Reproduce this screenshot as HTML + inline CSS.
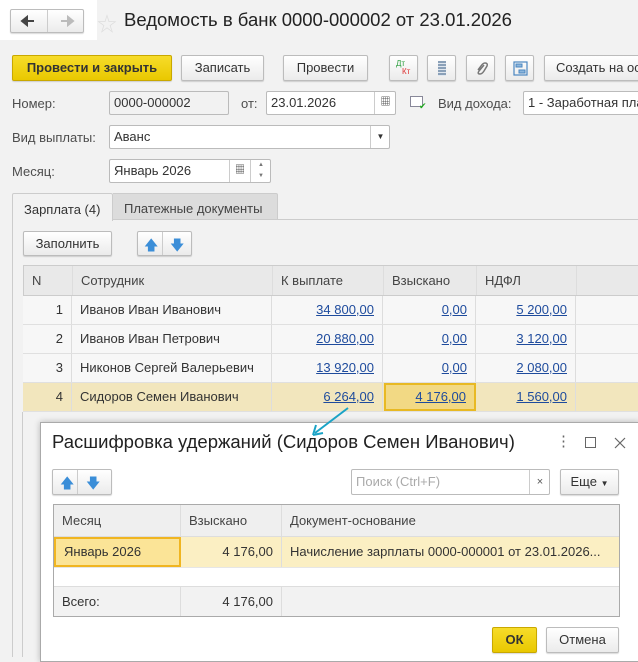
<!DOCTYPE html>
<html><head><meta charset="utf-8"><style>
*{box-sizing:border-box;margin:0;padding:0}
body{width:638px;height:657px;overflow:hidden;background:#f2f2f2;font-family:"Liberation Sans","Noto Sans CJK SC",sans-serif;font-size:13px;color:#333;position:relative}
.a{position:absolute}
.btn{position:absolute;background:linear-gradient(#fff,#ebebeb);border:1px solid #bcbcbc;border-radius:2px;box-shadow:0 1px 1px rgba(0,0,0,.15);text-align:center;color:#333;font-size:13px;white-space:nowrap;overflow:hidden}
.in{position:absolute;background:#fff;border:1px solid #bbb;border-radius:2px;padding-left:4px;font-size:13px;color:#333;white-space:nowrap;overflow:hidden}
.lbl{position:absolute;font-size:13px;color:#4d4d4d}
.c{position:absolute;height:100%;border-right:1px solid #ddd;padding:0 8px;white-space:nowrap}
.lnk{color:#1e4b9d;text-decoration:underline}
.row{position:absolute;left:23px;width:615px;height:29px;border-bottom:1px solid #e0e0e0;line-height:28px;background:#f7f7f7}
</style></head><body>
<div class="a" style="left:0;top:0;width:97px;height:40px;background:#fff"></div>
<div class="btn" style="left:10px;top:9px;width:74px;height:24px;"></div>
<div class="a" style="left:47px;top:10px;width:1px;height:22px;background:#ccc"></div>
<svg class="a" style="left:20px;top:14px" width="60" height="14"><path d="M2 7 H14 M2 7 L7 3 V11 Z" stroke="#444" stroke-width="2" fill="#444"/><path d="M41 7 H53 M53 7 L48 3 V11 Z" stroke="#bbb" stroke-width="2" fill="#bbb"/></svg>
<div class="a" style="left:97px;top:8px;font-size:20px;color:#ddd">☆</div>
<div class="a" style="left:124px;top:9px;font-size:18.5px;color:#222;white-space:nowrap">Ведомость в банк 0000-000002 от 23.01.2026</div>

<div class="btn" style="left:12px;top:55px;width:160px;height:26px;line-height:24px;background:linear-gradient(#f7dc2a,#e9c800);border-color:#c9a800;font-weight:bold;color:#333">Провести и закрыть</div>
<div class="btn" style="left:181px;top:55px;width:83px;height:26px;line-height:24px">Записать</div>
<div class="btn" style="left:283px;top:55px;width:85px;height:26px;line-height:24px">Провести</div>
<div class="btn" style="left:389px;top:55px;width:29px;height:26px"><span class="a" style="left:6px;top:3px;font-size:8px;color:#2a9d3c">Дт</span><span class="a" style="left:12px;top:11px;font-size:8px;color:#d33">Кт</span></div>
<div class="btn" style="left:427px;top:55px;width:29px;height:26px"><div class="a" style="left:10px;top:5px;width:8px;height:15px;background:repeating-linear-gradient(#8aa0b8 0 2px,#dfe6ee 2px 3px)"></div></div>
<div class="btn" style="left:466px;top:55px;width:29px;height:26px"><svg class="a" style="left:8px;top:5px" width="13" height="15"><path d="M9 4 L4 10 Q2 13 5 13 Q7 13 9 10 L12 5 Q13 2 10 2 Q8 2 6 5 L3 9" stroke="#777" stroke-width="1.5" fill="none"/></svg></div>
<div class="btn" style="left:505px;top:55px;width:29px;height:26px"><svg class="a" style="left:7px;top:5px" width="15" height="15"><rect x="1" y="1" width="13" height="13" fill="none" stroke="#4a86c0" stroke-width="1.2"/><rect x="3" y="3" width="6" height="3" fill="#8cb6dd" stroke="#4a86c0"/><rect x="6" y="9" width="6" height="3" fill="#8cb6dd" stroke="#4a86c0"/></svg></div>
<div class="btn" style="left:544px;top:55px;width:110px;height:26px;line-height:24px;text-align:left;padding-left:11px">Создать на основании</div>

<div class="lbl" style="left:12px;top:96px">Номер:</div>
<div class="in" style="left:109px;top:91px;width:120px;height:24px;line-height:22px;background:#f2f2f2">0000-000002</div>
<div class="lbl" style="left:241px;top:96px">от:</div>
<div class="in" style="left:266px;top:91px;width:130px;height:24px;line-height:22px">23.01.2026<span class="a" style="left:107px;top:0;width:22px;height:22px;border-left:1px solid #ccc;text-align:center;font-size:10px">▦</span></div>
<div class="a" style="left:410px;top:96px;width:13px;height:11px;border:1px solid #889;background:#fff"></div><div class="a" style="left:419px;top:101px;color:#2a2;font-size:9px">✔</div>
<div class="lbl" style="left:438px;top:96px">Вид дохода:</div>
<div class="in" style="left:523px;top:91px;width:130px;height:24px;line-height:22px">1 - Заработная плата</div>

<div class="lbl" style="left:12px;top:130px">Вид выплаты:</div>
<div class="in" style="left:109px;top:125px;width:281px;height:24px;line-height:22px">Аванс<span class="a" style="left:260px;top:0;width:20px;height:22px;border-left:1px solid #ccc;text-align:center;font-size:8px">▼</span></div>

<div class="lbl" style="left:12px;top:164px">Месяц:</div>
<div class="in" style="left:109px;top:159px;width:162px;height:24px;line-height:22px">Январь 2026<span class="a" style="left:119px;top:0;width:21px;height:22px;border-left:1px solid #ccc;text-align:center;font-size:10px">▦</span><span class="a" style="left:140px;top:0;width:21px;height:22px;border-left:1px solid #ccc;font-size:6px;line-height:11px;text-align:center;color:#777">▲<br>▼</span></div>

<div class="a" style="left:12px;top:193px;width:101px;height:28px;background:#f2f2f2;border:1px solid #ccc;border-bottom:none;border-radius:2px 2px 0 0;padding:8px 0 0 11px">Зарплата (4)</div>
<div class="a" style="left:113px;top:193px;width:165px;height:27px;background:#dcdcdc;border:1px solid #ccc;border-left:none;border-radius:0 2px 0 0;padding:7px 0 0 11px;color:#444">Платежные документы</div>
<div class="a" style="left:278px;top:219px;width:360px;height:1px;background:#ccc"></div>
<div class="a" style="left:12px;top:220px;width:1px;height:437px;background:#ccc"></div>

<div class="btn" style="left:23px;top:231px;width:89px;height:25px;line-height:23px">Заполнить</div>
<div class="btn" style="left:137px;top:231px;width:55px;height:25px"><span class="a" style="left:6px;top:3px;color:#3b8ed8;font-size:14px">🡅</span><span class="a" style="left:24px;top:-1px;width:1px;height:24px;background:#ccc"></span><span class="a" style="left:32px;top:3px;color:#3b8ed8;font-size:14px">🡇</span></div>

<div class="a" style="left:23px;top:265px;width:615px;height:31px;background:#e9e9e9;border:1px solid #ccc;border-right:none;line-height:30px;color:#444">
<div class="c" style="left:0;width:49px">N</div><div class="c" style="left:49px;width:200px">Сотрудник</div><div class="c" style="left:249px;width:111px">К выплате</div><div class="c" style="left:360px;width:93px">Взыскано</div><div class="c" style="left:453px;width:100px">НДФЛ</div></div>
<div class="row" style="top:296px"><div class="c" style="left:0;width:49px;text-align:right">1</div><div class="c" style="left:49px;width:200px">Иванов Иван Иванович</div><div class="c" style="left:249px;width:111px;text-align:right"><span class="lnk">34 800,00</span></div><div class="c" style="left:360px;width:93px;text-align:right"><span class="lnk">0,00</span></div><div class="c" style="left:453px;width:100px;text-align:right"><span class="lnk">5 200,00</span></div></div>
<div class="row" style="top:325px"><div class="c" style="left:0;width:49px;text-align:right">2</div><div class="c" style="left:49px;width:200px">Иванов Иван Петрович</div><div class="c" style="left:249px;width:111px;text-align:right"><span class="lnk">20 880,00</span></div><div class="c" style="left:360px;width:93px;text-align:right"><span class="lnk">0,00</span></div><div class="c" style="left:453px;width:100px;text-align:right"><span class="lnk">3 120,00</span></div></div>
<div class="row" style="top:354px"><div class="c" style="left:0;width:49px;text-align:right">3</div><div class="c" style="left:49px;width:200px">Никонов Сергей Валерьевич</div><div class="c" style="left:249px;width:111px;text-align:right"><span class="lnk">13 920,00</span></div><div class="c" style="left:360px;width:93px;text-align:right"><span class="lnk">0,00</span></div><div class="c" style="left:453px;width:100px;text-align:right"><span class="lnk">2 080,00</span></div></div>
<div class="row" style="top:383px;background:#f2e6bd"><div class="c" style="left:0;width:49px;text-align:right">4</div><div class="c" style="left:49px;width:200px">Сидоров Семен Иванович</div><div class="c" style="left:249px;width:111px;text-align:right"><span class="lnk">6 264,00</span></div><div class="c" style="left:361px;width:92px;text-align:right;background:#f2d984;border:2px solid #e8b923;line-height:24px"><span class="lnk">4 176,00</span></div><div class="c" style="left:453px;width:100px;text-align:right"><span class="lnk">1 560,00</span></div></div>
<div class="a" style="left:22px;top:412px;width:1px;height:245px;background:#ccc"></div>

<div class="a" style="left:40px;top:422px;width:600px;height:240px;background:#fff;border:1px solid #aaa;box-shadow:0 0 6px rgba(0,0,0,.25)"></div>
<div class="a" style="left:52px;top:431px;font-size:18.5px;color:#222;white-space:nowrap">Расшифровка удержаний (Сидоров Семен Иванович)</div>
<div class="a" style="left:556px;top:432px;font-size:15px;color:#666">⋮</div>
<div class="a" style="left:585px;top:437px;width:11px;height:11px;border:1px solid #666"></div>
<svg class="a" style="left:614px;top:437px" width="12" height="12"><path d="M1 1 L11 11 M11 1 L1 11" stroke="#666" stroke-width="1.2"/></svg>
<svg class="a" style="left:300px;top:400px" width="60" height="45"><line x1="48" y1="8" x2="15" y2="33" stroke="#1aa3c6" stroke-width="2"/><path d="M13 35 L16 25 M13 35 L23 33" stroke="#1aa3c6" stroke-width="2" fill="none"/></svg>

<div class="btn" style="left:52px;top:469px;width:60px;height:26px"><span class="a" style="left:7px;top:3px;color:#3b8ed8;font-size:14px">🡅</span><span class="a" style="left:24px;top:-1px;width:1px;height:25px;background:#ccc"></span><span class="a" style="left:33px;top:3px;color:#3b8ed8;font-size:14px">🡇</span></div>
<div class="in" style="left:351px;top:469px;width:199px;height:26px;line-height:24px;color:#aaa">Поиск (Ctrl+F)<span class="a" style="left:177px;top:0;width:21px;height:24px;border-left:1px solid #ccc;text-align:center;color:#555;font-size:11px">×</span></div>
<div class="btn" style="left:560px;top:469px;width:59px;height:26px;line-height:24px">Еще <span style="font-size:8px">▼</span></div>

<div class="a" style="left:53px;top:504px;width:567px;height:113px;border:1px solid #aaa;background:#fff">
<div class="a" style="left:0;top:0;width:565px;height:32px;background:#efefef;border-bottom:1px solid #ddd;line-height:31px;color:#444"><div class="c" style="left:0;width:127px">Месяц</div><div class="c" style="left:127px;width:101px">Взыскано</div><div class="c" style="left:228px;width:337px;border:none">Документ-основание</div></div>
<div class="a" style="left:0;top:32px;width:565px;height:30px;background:#fbefc3;line-height:29px"><div class="c" style="left:0;width:127px;background:#fbe497;border:2px solid #f0b521;line-height:25px">Январь 2026</div><div class="c" style="left:127px;width:101px;text-align:right">4 176,00</div><div class="c" style="left:228px;width:337px;border:none">Начисление зарплаты 0000-000001 от 23.01.2026...</div></div>
<div class="a" style="left:0;top:62px;width:565px;height:20px;border-top:1px solid #e6e6e6"></div>
<div class="a" style="left:0;top:81px;width:565px;height:30px;background:#f2f2f2;border-top:1px solid #ddd;line-height:29px"><div class="c" style="left:0;width:127px">Всего:</div><div class="c" style="left:127px;width:101px;text-align:right">4 176,00</div></div>
</div>

<div class="btn" style="left:492px;top:627px;width:45px;height:26px;line-height:24px;background:linear-gradient(#f7dc2a,#e9c800);border-color:#c9a800;font-weight:bold">ОК</div>
<div class="btn" style="left:546px;top:627px;width:73px;height:26px;line-height:24px">Отмена</div>
</body></html>
